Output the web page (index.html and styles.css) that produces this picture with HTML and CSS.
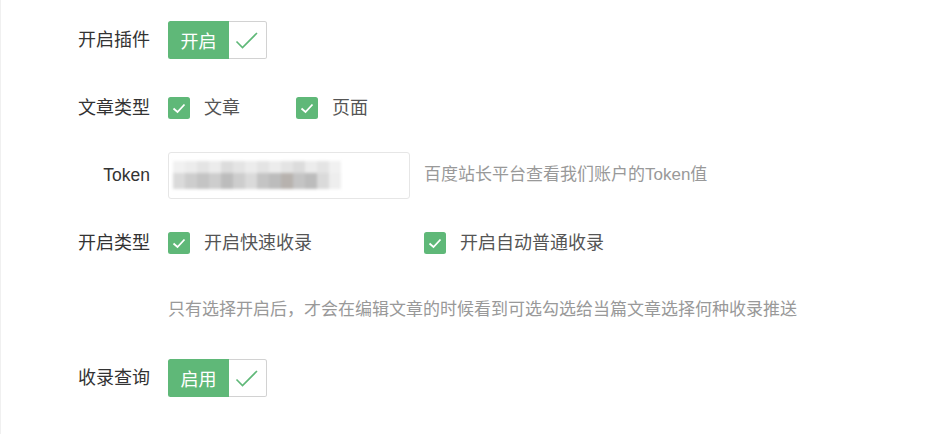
FILE: index.html
```html
<!DOCTYPE html>
<html lang="zh-CN">
<head>
<meta charset="utf-8">
<title>设置</title>
<link rel="stylesheet" href="styles.css">
</head>
<body>
<div class="page">
  <form class="form">
    <div class="row">
      <label class="label">开启插件</label>
      <div class="switch">
        <span class="switch-text">开启</span>
        <i class="switch-mark"><svg width="38" height="36" viewBox="0 0 38 36"><path d="M7.5 19.5 L13.5 25.5 L28 11" fill="none" stroke="#5FB878" stroke-width="1.6"/></svg></i>
      </div>
    </div>

    <div class="row">
      <label class="label">文章类型</label>
      <div class="check w128"><span class="box"><svg width="22" height="22" viewBox="0 0 22 22"><path d="M5.5 11.5 L9.5 15 L16.5 7.5" fill="none" stroke="#fff" stroke-width="1.8"/></svg></span><span class="check-text">文章</span></div>
      <div class="check"><span class="box"><svg width="22" height="22" viewBox="0 0 22 22"><path d="M5.5 11.5 L9.5 15 L16.5 7.5" fill="none" stroke="#fff" stroke-width="1.8"/></svg></span><span class="check-text">页面</span></div>
    </div>

    <div class="row">
      <label class="label label-latin">Token</label>
      <div class="input">
        <div class="blur">
          <div class="blur-row top">
            <span class="c1"></span><span class="c2"></span><span class="c3"></span><span class="c2"></span><span class="c4"></span><span class="c3"></span><span class="c2"></span><span class="c3"></span><span class="c2"></span><span class="c3"></span><span class="c4"></span><span class="c2"></span><span class="c3"></span><span class="c1"></span>
          </div>
          <div class="blur-row bottom">
            <span class="d1"></span><span class="d2"></span><span class="d3"></span><span class="d2"></span><span class="d4"></span><span class="d2"></span><span class="d1"></span><span class="d3"></span><span class="d4"></span><span class="d5"></span><span class="d3"></span><span class="d4"></span><span class="d1"></span><span class="d0"></span>
          </div>
        </div>
      </div>
      <span class="aux">百度站长平台查看我们账户的Token值</span>
    </div>

    <div class="row">
      <label class="label">开启类型</label>
      <div class="check w256"><span class="box"><svg width="22" height="22" viewBox="0 0 22 22"><path d="M5.5 11.5 L9.5 15 L16.5 7.5" fill="none" stroke="#fff" stroke-width="1.8"/></svg></span><span class="check-text">开启快速收录</span></div>
      <div class="check"><span class="box"><svg width="22" height="22" viewBox="0 0 22 22"><path d="M5.5 11.5 L9.5 15 L16.5 7.5" fill="none" stroke="#fff" stroke-width="1.8"/></svg></span><span class="check-text">开启自动普通收录</span></div>
    </div>

    <div class="row">
      <span class="label"></span>
      <span class="aux aux-note">只有选择开启后，才会在编辑文章的时候看到可选勾选给当篇文章选择何种收录推送</span>
    </div>

    <div class="row">
      <label class="label">收录查询</label>
      <div class="switch">
        <span class="switch-text">启用</span>
        <i class="switch-mark"><svg width="38" height="36" viewBox="0 0 38 36"><path d="M7.5 19.5 L13.5 25.5 L28 11" fill="none" stroke="#5FB878" stroke-width="1.6"/></svg></i>
      </div>
    </div>
  </form>
</div>
</body>
</html>
```

FILE: styles.css
```css
html, body {
  margin: 0;
  padding: 0;
  background: #fff;
}

.page {
  width: 928px;
  height: 434px;
  box-sizing: border-box;
  border-left: 1px solid #f0f0f0;
  font-family: "Liberation Sans", "Noto Sans CJK SC", sans-serif;
  overflow: hidden;
}

.form {
  display: flex;
  flex-direction: column;
  gap: 19.5px;
  padding-top: 16px;
}

.row {
  display: flex;
  align-items: center;
  height: 48px;
}

.label {
  width: 149px;
  flex: none;
  text-align: right;
  padding-right: 18px;
  font-size: 18px;
  line-height: 24px;
  color: #333;
}

.label-latin {
  font-size: 17.5px;
}

.switch {
  display: flex;
  height: 38px;
  box-sizing: border-box;
}

.switch-text {
  display: flex;
  align-items: center;
  background: #5FB878;
  color: #fff;
  font-size: 18px;
  padding: 0 12.5px;
  border-radius: 2.5px 0 0 2.5px;
}

.switch-mark {
  display: block;
  width: 38px;
  height: 38px;
  box-sizing: border-box;
  border: 1px solid #d2d2d2;
  border-left: none;
  border-radius: 0 2.5px 2.5px 0;
}

.switch-mark svg {
  display: block;
}

.check {
  display: flex;
  align-items: center;
}

.w128 { width: 128px; }
.w256 { width: 256px; }

.box {
  width: 22px;
  height: 22px;
  background: #5FB878;
  border-radius: 2.5px;
  flex: none;
}

.box svg {
  display: block;
}

.check-text {
  margin-left: 14px;
  font-size: 18px;
  line-height: 24px;
  color: #555;
}

.input {
  width: 242px;
  height: 47px;
  box-sizing: border-box;
  border: 1px solid #e6e6e6;
  border-radius: 3px;
  display: flex;
  align-items: center;
  padding-left: 4px;
}

.blur {
  display: flex;
  flex-direction: column;
  filter: blur(1.6px);
  margin-top: -1px;
}

.blur-row {
  display: flex;
}

.blur-row span {
  display: block;
  width: 12px;
  height: 14px;
}

.blur-row.top span { height: 12px; }
.blur-row.bottom span { height: 16px; }

.c1 { background: #f1f1f1; }
.c2 { background: #ececec; }
.c3 { background: #e4e4e4; }
.c4 { background: #dcdcdc; }

.d0 { background: #eeeeee; }
.d1 { background: #dadada; }
.d2 { background: #cdcdcd; }
.d3 { background: #c4c4c4; }
.d4 { background: #bcbcbc; }
.d5 { background: #b7b2ae; }

.aux {
  margin-left: 14px;
  font-size: 17px;
  line-height: 24px;
  color: #999;
}

.aux-note {
  margin-left: 0;
}
```
